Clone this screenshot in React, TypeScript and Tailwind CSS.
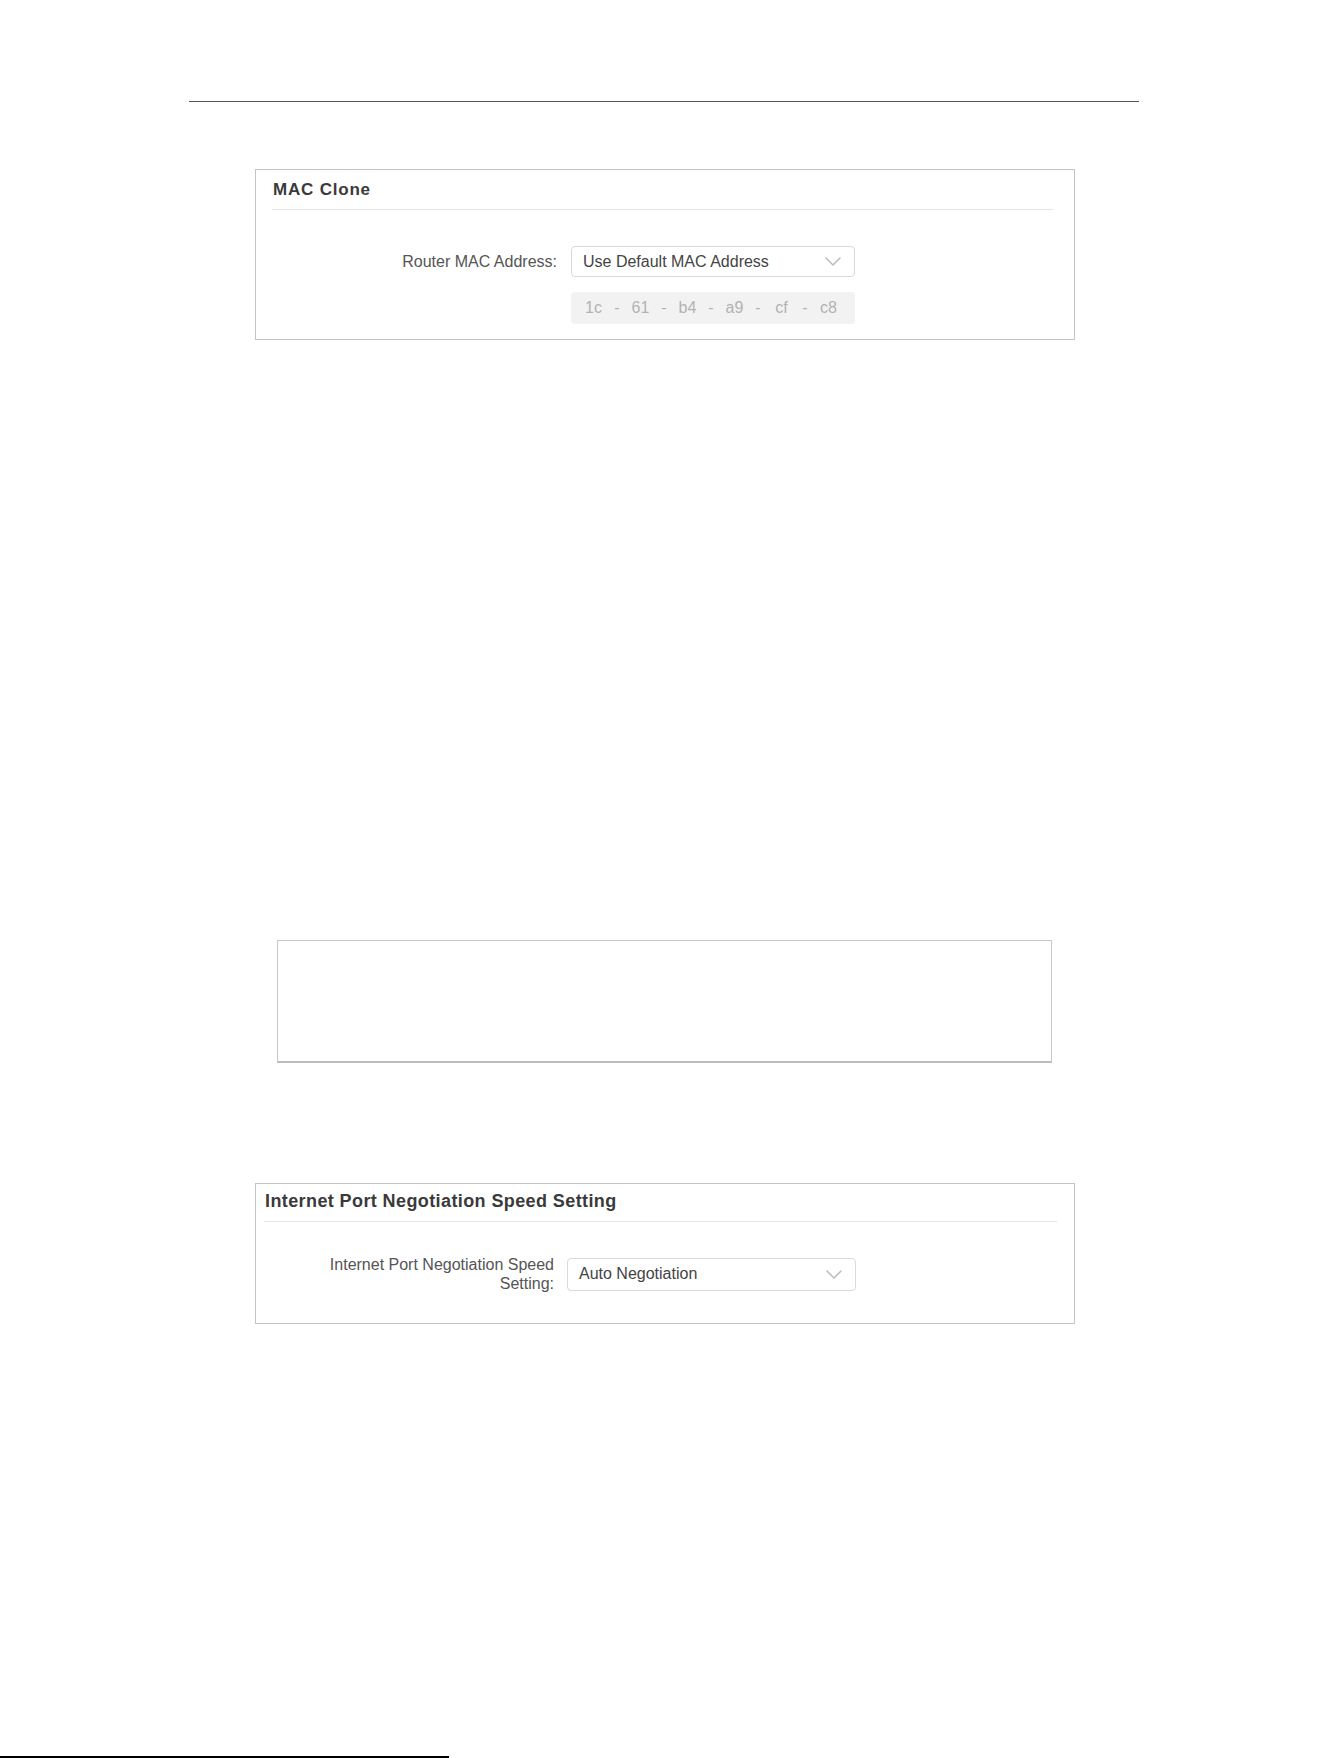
import React from "react";

const font = { fontFamily: '"Liberation Sans", Arial, sans-serif' };

function Chevron() {
  return (
    <svg width="16" height="9" viewBox="0 0 16 9" fill="none" className="shrink-0">
      <path d="M1 1L8 8L15 1" stroke="#bdbdbd" strokeWidth="1.6" strokeLinecap="round" strokeLinejoin="round" />
    </svg>
  );
}

function Select({ value, className }: { value: string; className: string }) {
  return (
    <div
      className={`flex items-center justify-between rounded-[4px] border border-[#d9d9d9] bg-white pl-[11px] pr-[13px] text-[16px] text-[#444] ${className}`}
    >
      <span>{value}</span>
      <Chevron />
    </div>
  );
}

const mac = ["1c", "61", "b4", "a9", "cf", "c8"];

export default function App() {
  return (
    <div className="relative h-[1758px] w-[1330px] overflow-hidden bg-white pt-[101px]" style={font}>
      <div className="ml-[189px] h-px w-[950px] bg-[#555]" />

      {/* MAC Clone */}
      <div className="ml-[255px] mt-[67px] h-[171px] w-[820px] border border-[#c4c4c4]">
        <div className="pl-[17px] pt-[10px] text-[17px] font-bold leading-[20px] tracking-[0.8px] text-[#3a3a3a]">
          MAC Clone
        </div>
        <div className="ml-[16px] mr-[20px] mt-[9px] h-px bg-[#e6e6e6]" />
        <div className="mt-[36px] flex items-center">
          <div className="w-[301px] text-right text-[16px] text-[#555]">Router MAC Address:</div>
          <Select value="Use Default MAC Address" className="ml-[14px] h-[31px] w-[284px]" />
        </div>
        <div className="ml-[315px] mt-[15px] flex h-[32px] w-[284px] items-center rounded-[4px] bg-[#f2f2f2] pl-[6px] text-[16px] text-[#b3b3b3]">
          {mac.map((m, i) => (
            <React.Fragment key={m}>
              {i > 0 && <span className="w-[14px] text-center">-</span>}
              <span className="w-[33px] text-center">{m}</span>
            </React.Fragment>
          ))}
        </div>
      </div>

      {/* empty panel */}
      <div className="ml-[277px] mt-[600px] h-[123px] w-[775px] border border-b-2 border-[#c8c8c8] border-b-[#bcbcbc]" />

      {/* Internet Port Negotiation Speed Setting */}
      <div className="ml-[255px] mt-[120px] h-[141px] w-[820px] border border-[#c4c4c4]">
        <div className="pl-[9px] pt-[6px] text-[18px] font-bold leading-[22px] tracking-[0.4px] text-[#3a3a3a]">
          Internet Port Negotiation Speed Setting
        </div>
        <div className="ml-[8px] mr-[17px] mt-[9px] h-px bg-[#e6e6e6]" />
        <div className="mt-[33px] flex items-center">
          <div className="flex w-[298px] justify-end">
            <div className="max-w-[236px] text-right text-[16px] leading-[19px] text-[#555]">
              Internet Port Negotiation Speed Setting:
            </div>
          </div>
          <Select value="Auto Negotiation" className="ml-[13px] h-[33px] w-[289px]" />
        </div>
      </div>

      <div className="absolute bottom-0 left-0 h-[2px] w-[449px] bg-black" />
    </div>
  );
}
